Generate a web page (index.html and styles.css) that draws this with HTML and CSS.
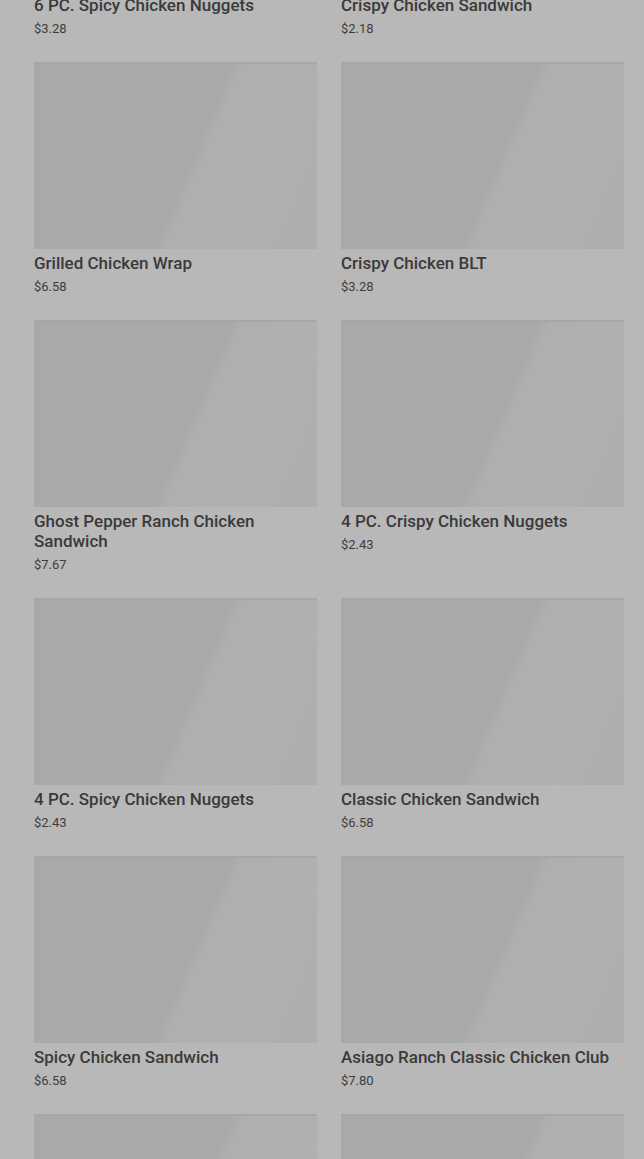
FILE: index.html
```html
<!DOCTYPE html>
<html lang="en">
<head>
<meta charset="utf-8">
<title>Menu</title>
<link rel="stylesheet" href="styles.css">
</head>
<body>
<main class="menu">
  <div class="grid">
    <article class="card"><div class="thumb"></div><h3 class="name">6 PC. Spicy Chicken Nuggets</h3><p class="price">$3.28</p></article>
    <article class="card"><div class="thumb"></div><h3 class="name">Crispy Chicken Sandwich</h3><p class="price">$2.18</p></article>
    <article class="card"><div class="thumb"></div><h3 class="name">Grilled Chicken Wrap</h3><p class="price">$6.58</p></article>
    <article class="card"><div class="thumb"></div><h3 class="name">Crispy Chicken BLT</h3><p class="price">$3.28</p></article>
    <article class="card"><div class="thumb"></div><h3 class="name">Ghost Pepper Ranch Chicken Sandwich</h3><p class="price">$7.67</p></article>
    <article class="card"><div class="thumb"></div><h3 class="name">4 PC. Crispy Chicken Nuggets</h3><p class="price">$2.43</p></article>
    <article class="card"><div class="thumb"></div><h3 class="name">4 PC. Spicy Chicken Nuggets</h3><p class="price">$2.43</p></article>
    <article class="card"><div class="thumb"></div><h3 class="name">Classic Chicken Sandwich</h3><p class="price">$6.58</p></article>
    <article class="card"><div class="thumb"></div><h3 class="name">Spicy Chicken Sandwich</h3><p class="price">$6.58</p></article>
    <article class="card"><div class="thumb"></div><h3 class="name">Asiago Ranch Classic Chicken Club</h3><p class="price">$7.80</p></article>
    <article class="card"><div class="thumb"></div><h3 class="name">Chicken Caesar Wrap</h3><p class="price">$5.99</p></article>
    <article class="card"><div class="thumb"></div><h3 class="name">Homestyle Chicken Sandwich</h3><p class="price">$6.29</p></article>
  </div>
</main>
</body>
</html>
```
FILE: styles.css
```css
html, body {
  margin: 0;
  padding: 0;
  background: #b8b8b8;
  overflow: hidden;
}
body {
  font-family: Roboto, "Liberation Sans", sans-serif;
  color: #363636;
}
.menu {
  padding: 0 20px 0 34px;
  margin-top: -196px;
}
.grid {
  display: grid;
  grid-template-columns: 283px 283px;
  column-gap: 24px;
  row-gap: 24px;
  align-items: start;
}
.card {
  display: flex;
  flex-direction: column;
}
.thumb {
  height: 187px;
  background: linear-gradient(113deg, #a9a9a9 0%, #a9a9a9 55%, #afafaf 58%, #b0b0b0 82%, #adadad 100%);
  box-shadow: inset 0 2px 0 #a6a6a6;
}
.name {
  margin: 4px 0 0;
  font-size: 17px;
  font-weight: 500;
  line-height: 20px;
  color: #3a3a3a;
}
.price {
  margin: 5px 0 0;
  font-size: 13px;
  font-weight: 400;
  line-height: 18px;
  color: #3e3e3e;
}
```
